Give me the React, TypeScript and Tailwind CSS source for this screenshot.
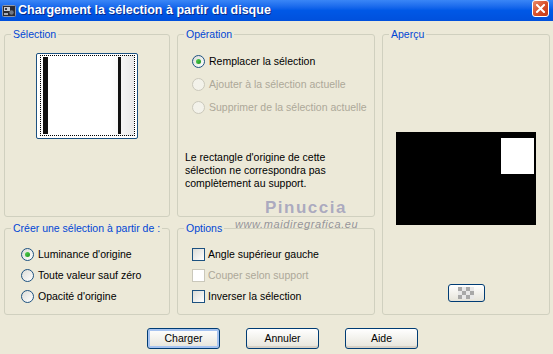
import React from 'react';

function Radio({ checked, disabled }: { checked?: boolean; disabled?: boolean }) {
  return (
    <div
      className={`flex h-[13px] w-[13px] shrink-0 items-center justify-center rounded-full border ${
        disabled ? 'border-[#CAC8BB] bg-[#F3F2EA]' : 'border-[#1C5180] bg-gradient-to-br from-[#DCDCD7] to-white'
      }`}
    >
      {checked && <div className="h-[5px] w-[5px] rounded-full bg-gradient-to-br from-[#55D155] to-[#1A941A]" />}
    </div>
  );
}

function Check({ disabled }: { disabled?: boolean }) {
  return (
    <div
      className={`h-[13px] w-[13px] shrink-0 border ${
        disabled ? 'border-[#CAC8BB] bg-white' : 'border-[#1C5180] bg-gradient-to-br from-[#DCDCD7] to-white'
      }`}
    />
  );
}

function Group({ label, className, children }: { label: string; className: string; children?: React.ReactNode }) {
  return (
    <fieldset className={`min-w-0 rounded-[3px] border border-[#D0D0BF] ${className}`}>
      <legend className="ml-[6px] whitespace-nowrap px-[2px] leading-[13px] text-[#0046D5]">{label}</legend>
      {children}
    </fieldset>
  );
}

function XpButton({ label, isDefault }: { label: string; isDefault?: boolean }) {
  return (
    <button
      className={`h-[21px] w-[73px] rounded-[3px] border border-[#003C74] bg-gradient-to-b from-white to-[#E6E4DA] text-black ${
        isDefault ? 'shadow-[inset_0_0_0_2px_#A6C3F0]' : 'shadow-[inset_0_-2px_0_#D6D0C5]'
      }`}
    >
      {label}
    </button>
  );
}

function Row({ children, muted, gap }: { children: React.ReactNode; muted?: boolean; gap: string }) {
  return (
    <div className={`flex h-[13px] items-center whitespace-nowrap leading-[13px] ${gap} ${muted ? 'text-[#ACA899]' : ''}`}>
      {children}
    </div>
  );
}

export default function App() {
  return (
    <div className="relative h-[354px] w-[553px] overflow-hidden bg-[#ECE9D8] font-['Liberation_Sans',Arial,sans-serif] text-[10.5px] text-black">
      {/* title bar */}
      <div className="flex h-[21px] items-center bg-gradient-to-b from-[#3A86F6] via-[#0058E6] to-[#0050DC] pl-[2px] pr-[4px]">
        <svg width="14" height="14" viewBox="0 0 14 14" className="mr-[2px]">
          <rect x="0.5" y="1.5" width="13" height="11" rx="1" fill="#2b2b33" stroke="#8d96a8" />
          <rect x="2" y="3" width="6" height="4" fill="#c9ced8" />
          <rect x="3" y="4" width="2" height="2" fill="#3b3b44" />
          <circle cx="9.5" cy="8.5" r="2.2" fill="#6f7886" />
          <rect x="2" y="9" width="4" height="2" fill="#a7aebb" />
        </svg>
        <span className="text-[12.5px] font-bold text-white [text-shadow:1px_1px_0_#0A2A8A]">
          Chargement la sélection à partir du disque
        </span>
        <div className="ml-auto flex h-[17px] w-[17px] items-center justify-center self-start rounded-[3px] border border-white bg-gradient-to-br from-[#E88A6B] via-[#D9502B] to-[#C23A17]">
          <svg width="9" height="9" viewBox="0 0 9 9">
            <path d="M1 1 L8 8 M8 1 L1 8" stroke="white" strokeWidth="2" strokeLinecap="square" />
          </svg>
        </div>
      </div>

      {/* body */}
      <div className="flex gap-x-[7px] pl-[4px] pt-[7px]">
        <div className="flex w-[166px] flex-col gap-y-[5px]">
          <Group label="Sélection" className="h-[189px]">
            <div className="mx-auto mt-[12px] h-[86px] w-[102px] rounded-[2px] border border-[#1C5180] bg-white pb-[2px] pl-[3px] pr-[2px] pt-[1px]">
              <div className="flex h-full w-full border border-dotted border-black bg-gradient-to-r from-white from-75% to-[#E9E9E9] py-[1px] pl-[2px] pr-[13px]">
                <div className="w-[5px] bg-[#111]" />
                <div className="flex-1" />
                <div className="w-[3px] bg-[#111]" />
              </div>
            </div>
          </Group>
          <Group label="Créer une sélection à partir de :" className="h-[93px]">
            <div className="flex flex-col gap-y-[8px] pl-[16px] pt-[13px]">
              <Row gap="gap-x-[4px]">
                <Radio checked />
                <span>Luminance d'origine</span>
              </Row>
              <Row gap="gap-x-[4px]">
                <Radio />
                <span>Toute valeur sauf zéro</span>
              </Row>
              <Row gap="gap-x-[4px]">
                <Radio />
                <span>Opacité d'origine</span>
              </Row>
            </div>
          </Group>
        </div>

        <div className="flex w-[198px] flex-col gap-y-[5px]">
          <Group label="Opération" className="h-[189px]">
            <div className="flex flex-col gap-y-[10px] pl-[14px] pt-[14px]">
              <Row gap="gap-x-[4px]">
                <Radio checked />
                <span>Remplacer la sélection</span>
              </Row>
              <Row gap="gap-x-[4px]" muted>
                <Radio disabled />
                <span>Ajouter à la sélection actuelle</span>
              </Row>
              <Row gap="gap-x-[4px]" muted>
                <Radio disabled />
                <span>Supprimer de la sélection actuelle</span>
              </Row>
            </div>
            <p className="mt-[37px] whitespace-nowrap pl-[7px] leading-[13px]">
              Le rectangle d'origine de cette
              <br />
              sélection ne correspondra pas
              <br />
              complètement au support.
            </p>
          </Group>
          <Group label="Options" className="h-[93px]">
            <div className="flex flex-col gap-y-[8px] pl-[14px] pt-[13px]">
              <Row gap="gap-x-[3px]">
                <Check />
                <span>Angle supérieur gauche</span>
              </Row>
              <Row gap="gap-x-[3px]" muted>
                <Check disabled />
                <span>Couper selon support</span>
              </Row>
              <Row gap="gap-x-[3px]">
                <Check />
                <span>Inverser la sélection</span>
              </Row>
            </div>
          </Group>
        </div>

        <Group label="Aperçu" className="h-[287px] w-[168px]">
          <div className="flex flex-col items-center">
            <div className="mt-[91px] flex h-[93px] w-[140px] items-start justify-end bg-black pr-[2px] pt-[6px]">
              <div className="h-[36px] w-[33px] bg-white" />
            </div>
            <button className="mt-[59px] flex h-[18px] w-[37px] items-center justify-center rounded-[3px] border border-[#003C74] bg-gradient-to-b from-white to-[#E6E4DA]">
              <div className="grid grid-cols-4 grid-rows-3">
                {Array.from({ length: 12 }).map((_, i) => (
                  <div
                    key={i}
                    className={`h-[4px] w-[4px] ${(Math.floor(i / 4) + (i % 4)) % 2 === 0 ? 'bg-[#A8A8A8]' : 'bg-[#E8E8E8]'}`}
                  />
                ))}
              </div>
            </button>
          </div>
        </Group>
      </div>

      {/* buttons */}
      <div className="flex gap-x-[26px] pl-[147px] pt-[13px]">
        <XpButton label="Charger" isDefault />
        <XpButton label="Annuler" />
        <XpButton label="Aide" />
      </div>

      {/* watermark */}
      <div className="pointer-events-none absolute left-[265px] top-[195px] text-[17px] font-bold tracking-[1.5px] text-[#8E8EB4]/70">
        Pinuccia
      </div>
      <div className="pointer-events-none absolute left-[235px] top-[216px] text-[11px] italic tracking-[0.6px] text-[#7C7C88]/80">
        www.maidiregrafica.eu
      </div>
    </div>
  );
}
